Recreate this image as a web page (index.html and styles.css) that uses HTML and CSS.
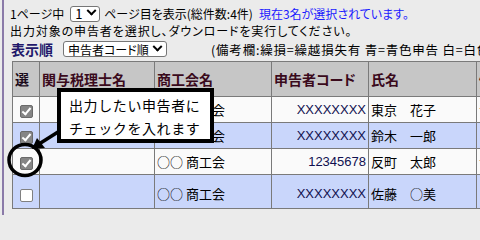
FILE: index.html
```html
<!DOCTYPE html>
<html lang="ja">
<head>
<meta charset="utf-8">
<link rel="stylesheet" href="styles.css">
</head>
<body>
<div class="page">
  <div class="line l1">
    <span>1ページ中</span>
    <span class="sel sel-small">1<span class="chev"></span></span>
    <span>ページ目を表示(総件数:4件)</span>
    <span class="link">現在3名が選択されています。</span>
  </div>
  <div class="line l2">出力対象の申告者を選択し、ダウンロードを実行してください。</div>
  <div class="line l3">
    <span class="order">表示順</span>
    <span class="sel sel-wide">申告者コード順<span class="chev"></span></span>
    <span class="note">(備考欄:繰損=繰越損失有 青=青色申告 白=白色申告</span>
  </div>
  <table class="grid">
    <colgroup>
      <col class="c-sel"><col class="c-tax"><col class="c-kai"><col class="c-code"><col class="c-name"><col class="c-more">
    </colgroup>
    <thead>
      <tr><th>選</th><th>関与税理士名</th><th>商工会名</th><th>申告者コード</th><th>氏名</th><th>備</th></tr>
    </thead>
    <tbody>
      <tr class="r1"><td class="cb"><span class="box on"></span></td><td></td><td>○○ 商工会</td><td class="code">XXXXXXXX</td><td>東京　花子</td><td>青</td></tr>
      <tr class="r2"><td class="cb"><span class="box on"></span></td><td></td><td>○○ 商工会</td><td class="code">XXXXXXXX</td><td>鈴木　一郎</td><td></td></tr>
      <tr class="r3"><td class="cb"><span class="box on"></span></td><td></td><td>○○ 商工会</td><td class="code num">12345678</td><td>反町　太郎</td><td>青</td></tr>
      <tr class="r4"><td class="cb"><span class="box"></span></td><td></td><td>○○ 商工会</td><td class="code">XXXXXXXX</td><td>佐藤　○美</td><td>白</td></tr>
    </tbody>
  </table>
  <div class="callout">出力したい申告者に<br>チェックを入れます</div>
  <svg class="mark" width="480" height="215" viewBox="0 0 480 215">
    <ellipse cx="25" cy="160" rx="16" ry="15.5" fill="none" stroke="#000" stroke-width="3.5"/>
    <line x1="58" y1="132" x2="39" y2="144" stroke="#000" stroke-width="3.5"/>
    <polygon points="32,149 37,138 45,148" fill="#000"/>
  </svg>
</div>
</body>
</html>
```
FILE: styles.css
```css
html, body {
  margin: 0;
  padding: 0;
  width: 480px;
  height: 215px;
  overflow: hidden;
}
body {
  background: #ebebeb;
  font-family: "Noto Sans CJK JP", "Liberation Sans", sans-serif;
  font-size: 12px;
  color: #000;
}
.page {
  position: relative;
  height: 215px;
  border-left: 2px solid #8a7aa8;
  margin-left: 2px;
  padding-left: 6px;
  padding-top: 5px;
  box-sizing: border-box;
  font-feature-settings: "palt";
  white-space: nowrap;
}
.line {
  display: flex;
  align-items: center;
  gap: 4px;
  height: 17px;
  line-height: 17px;
}
.line > * { flex: none; }
.l2 { height: 17px; letter-spacing: 0.9px; }
.l3 { height: 18px; margin-top: 1px; }
.link { color: #1a1aff; margin-left: 2px; }
.sel {
  display: inline-flex;
  align-items: center;
  justify-content: space-between;
  box-sizing: border-box;
  background: #fff;
  border: 1px solid #767676;
  border-radius: 3px;
  height: 16px;
  padding: 0 4px 0 4px;
  font-size: 13px;
}
.sel-small { width: 30px; margin-left: 2px; }
.sel-wide { width: 104px; margin-left: 6px; font-size: 12px; padding-left: 4px; padding-right: 5px; }
.chev {
  flex: none;
  width: 5px;
  height: 5px;
  border-right: 2px solid #000;
  border-bottom: 2px solid #000;
  transform: rotate(45deg) translate(-2px, -2px);
}
.order {
  font-weight: bold;
  font-size: 14px;
  color: #22186a;
  margin-left: 1px;
}
.note {
  margin-left: 40px;
  font-size: 12.5px;
  letter-spacing: 0.8px;
  font-feature-settings: normal;
}
.grid {
  margin-top: 3px;
  margin-left: 2px;
  border-collapse: collapse;
  table-layout: fixed;
  width: 620px;
  font-size: 13px;
}
.c-sel { width: 27px; }
.c-tax { width: 115px; }
.c-kai { width: 117px; }
.c-code { width: 97px; }
.c-name { width: 108px; }
.c-more { width: 156px; }
.grid th, .grid td {
  border: 1px solid #7a7a7a;
  padding: 0 2px;
  overflow: hidden;
  white-space: nowrap;
}
.grid th {
  background: #c6c6c6;
  height: 34px;
  text-align: left;
  font-weight: bold;
  font-size: 14px;
  color: #3a0a1c;
}
.grid thead tr th:first-child { color: #1a0a1a; }
.grid tbody td { height: 25px; }
.grid tr.r4 td { height: 29px; padding-top: 4px; }
.r1, .r3 { background: #fafafa; }
.r2, .r4 { background: #c9d6fb; }
.code {
  text-align: right;
  color: #101050;
  font-family: "Liberation Sans", sans-serif;
  padding-right: 4px;
}
.cb { text-align: center; padding: 0; }
.box {
  display: inline-block;
  width: 11px;
  height: 11px;
  border: 1px solid #808080;
  border-radius: 2px;
  background: #fff;
  vertical-align: middle;
  position: relative;
}
.box.on {
  background: #858585;
  border-color: #6a6a6a;
}
.box.on::after {
  content: "";
  position: absolute;
  left: 3px;
  top: 0px;
  width: 3px;
  height: 7px;
  border-right: 2px solid #fff;
  border-bottom: 2px solid #fff;
  transform: rotate(40deg);
}
.callout {
  position: absolute;
  left: 53px;
  top: 88px;
  width: 157px;
  height: 55px;
  box-sizing: border-box;
  border: 4px solid #000;
  background: #fff;
  font-size: 14px;
  letter-spacing: 0.6px;
  line-height: 23px;
  padding: 2px 0 0 8px;
  font-feature-settings: normal;
}
.mark {
  position: absolute;
  left: -4px;
  top: 0;
  pointer-events: none;
}
```
